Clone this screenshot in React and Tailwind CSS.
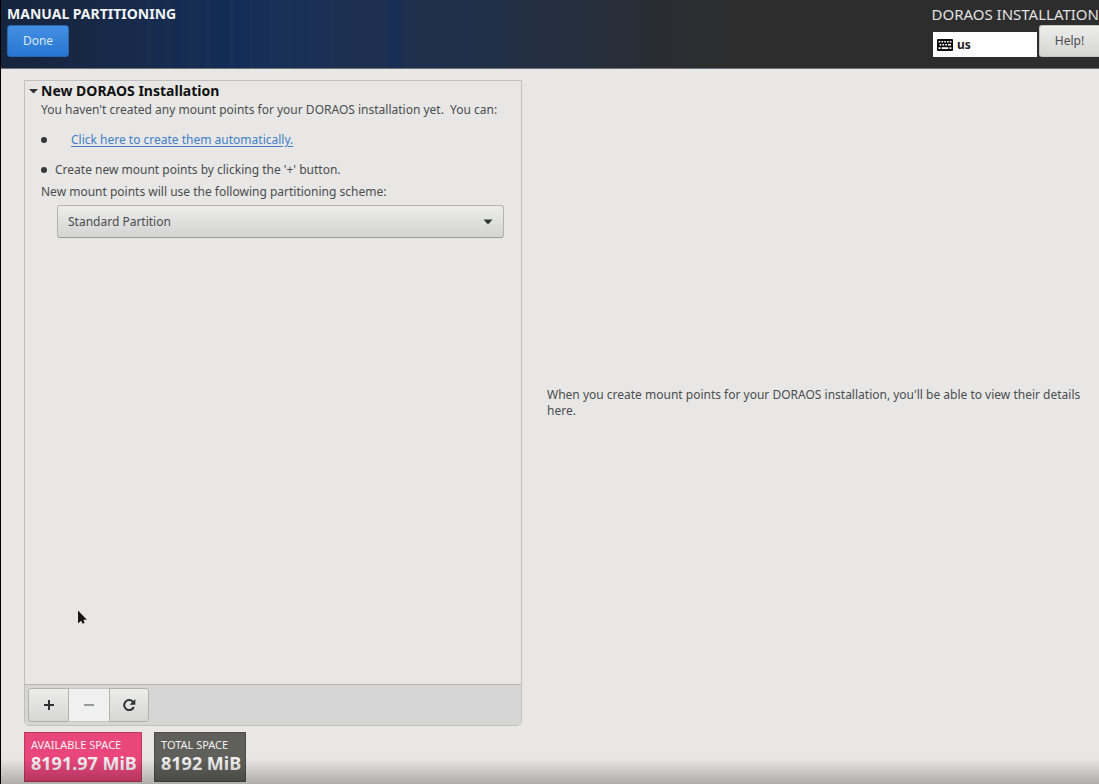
import React, { useState } from "react";

function KeyboardIcon() {
  return (
    <svg viewBox="0 0 16 12" className="h-3 w-4 shrink-0" aria-hidden="true">
      <rect width="16" height="12" rx="1" fill="#0c0c0c" />
      <g fill="#fff">
        <path d="M1.600 2h1.700v1.600H1.600zM4.400 2h1.700v1.600H4.400zM7.200 2h1.700v1.600H7.200zM10 2h1.700v1.600H10zM12.700 2h1.700v1.600h-1.700z" />
        <path d="M2.600 5h1.700v1.600H2.600zM5.400 5h1.700v1.600H5.400zM8.200 5h1.700v1.600H8.200zM11 5h3v1.600h-3z" />
        <path d="M1.600 8.200h1.900v1.700H1.600zM4.700 8.200h6.600v1.700H4.700zM12.500 8.200h1.900v1.700h-1.900z" />
      </g>
    </svg>
  );
}

function Pointer() {
  return (
    <svg viewBox="0 0 12 19" className="pointer-events-none absolute top-[609px] left-[75px] h-[19px] w-3" aria-hidden="true">
      <path d="M1.500 1v14.500l3.300-3 2.500 5.300 2.600-1.200-2.400-5.100h4.200z" fill="#e9e9e9" />
      <path d="M2 1.500v13l3-2.800 1.800 3 1.700-.8-1-3.200h3.400z" fill="#161616" />
    </svg>
  );
}

function HeaderStreaks() {
  return (
    <svg viewBox="0 0 740 68" preserveAspectRatio="none" className="pointer-events-none absolute inset-y-0 left-0 h-full w-2/3" aria-hidden="true">
      <g fill="#0c2b5c" opacity="0.3">
        <path d="M158 0h5v68h-5zM176 0h8v68h-8zM202 0h5v68h-5zM213 0h18v68h-18zM236 0h14v68h-14zM392 0h14v68h-14z" />
      </g>
      <g fill="#3a5d8c" opacity="0.07">
        <path d="M148 0h3v68h-3zM168 0h3v68h-3zM190 0h4v68h-4zM208 0h3v68h-3zM231 0h4v68h-4zM252 0h3v68h-3zM272 0h3v68h-3zM290 0h4v68h-4zM312 0h3v68h-3zM334 0h3v68h-3z" />
      </g>
    </svg>
  );
}

const toolButton =
  "flex h-[34px] items-center justify-center border-[#b2b2b0] bg-linear-to-b from-[#ededec] to-[#d6d6d4] text-[#2e3436]";

function Space({ label, value, className }) {
  return (
    <div className={`flex h-[50px] flex-col border border-black/20 px-1.5 pt-1 whitespace-nowrap text-[#f3f0f1] ${className}`}>
      <span className="text-[11px] leading-4">{label}</span>
      <span className="text-lg leading-5 font-bold">{value}</span>
    </div>
  );
}

export default function App() {
  const [scheme, setScheme] = useState("Standard Partition");
  return (
    <div className="relative flex min-h-screen flex-col overflow-hidden border-l border-black bg-[#e8e7e5] font-['Noto_Sans',sans-serif] text-xs leading-4 text-[#4a4d4e]">
      <header className="relative flex h-[69px] justify-between border-b border-[#70747a] bg-[linear-gradient(90deg,#16243d_0%,#172a4a_12%,#162d54_20%,#172f58_24%,#1d3050_33%,#202f4a_42%,#242f3e_52%,#292d33_60%,#2d2d2d_67%)] pt-1 pl-1.5">
        <HeaderStreaks />
        <div className="relative flex flex-col items-start gap-px">
          <h1 className="text-sm leading-5 font-bold text-[#f2f4f7]">MANUAL PARTITIONING</h1>
          <button type="button" className="h-8 w-[62px] rounded-[3px] border border-[#2867ab] bg-linear-to-b from-[#438fe4] to-[#2676d0] text-[#dce9f8]">
            Done
          </button>
        </div>
        <div className="flex flex-col items-end gap-px">
          <p className="text-[15px] leading-5 whitespace-nowrap text-[#e1e1e1]">DORAOS INSTALLATION</p>
          <div className="flex items-end gap-0.5">
            <button type="button" aria-label="Keyboard layout: us" className="flex h-[25px] w-[104px] items-center gap-1 bg-white pl-1 font-bold text-[#222]">
              <KeyboardIcon />
              us
            </button>
            <button type="button" className="h-8 w-[60px] rounded-l-[3px] border border-r-0 border-[#c4c4c2] bg-linear-to-b from-[#ededec] to-[#d5d5d3] text-[#4a4d4e]">
              Help!
            </button>
          </div>
        </div>
      </header>

      <main className="grid flex-1 grid-cols-[498fr_552fr] gap-x-[25px] pt-[11px] pl-[23px]">
        <section className="flex flex-col rounded-b-[5px] border border-[#c0c0be]">
          <div className="flex-1 pr-[17px] pl-4">
            <h2 className="mb-px -ml-3 flex items-center text-sm leading-5 font-bold text-[#111]">
              <svg viewBox="0 0 12 8" className="h-2 w-3 shrink-0" aria-hidden="true">
                <path d="M0 2h9L4.500 6.500z" fill="#2e3436" />
              </svg>
              New DORAOS Installation
            </h2>
            <p className="whitespace-pre">{"You haven't created any mount points for your DORAOS installation yet.  You can:"}</p>
            <ul>
              <li className="mt-3.5 flex items-center">
                <span className="mr-6 size-1.5 rounded-full bg-[#35383a]" />
                <a href="#automatic" className="text-[#3f80c8] underline underline-offset-2">Click here to create them automatically.</a>
              </li>
              <li className="mt-3.5 flex items-center">
                <span className="mr-2 size-1.5 rounded-full bg-[#35383a]" />
                Create new mount points by clicking the '+' button.
              </li>
            </ul>
            <label htmlFor="scheme" className="mt-1.5 block">New mount points will use the following partitioning scheme:</label>
            <div className="mt-[5px] ml-4 grid items-center">
              <select
                id="scheme"
                value={scheme}
                onChange={(e) => setScheme(e.target.value)}
                className="col-start-1 row-start-1 h-[33px] w-full appearance-none rounded-[3px] border border-[#b4b4b2] border-b-[#999] bg-linear-to-b from-[#ececeb] to-[#d4d4d2] px-2.5 text-[#4a4d4e]"
              >
                <option>Standard Partition</option>
                <option>LVM</option>
                <option>LVM Thin Provisioning</option>
              </select>
              <svg viewBox="0 0 10 6" className="pointer-events-none col-start-1 row-start-1 mr-[11px] h-1.5 w-2.5 justify-self-end" aria-hidden="true">
                <path d="M0.500 0.500h9L5 5.500z" fill="#2e3436" />
              </svg>
            </div>
          </div>
          <div className="flex h-[41px] items-center border-t border-[#b8b8b6] bg-[#d6d6d6] pl-[3px]">
            <button type="button" aria-label="Add mount point" className={`${toolButton} w-[41px] rounded-l-[3px] border`}>
              <svg viewBox="0 0 10 10" className="size-2.5" aria-hidden="true">
                <path d="M5 0v10M0 5h10" stroke="currentColor" strokeWidth="2" />
              </svg>
            </button>
            <button type="button" disabled aria-label="Remove mount point" className="flex h-[34px] w-10 items-center justify-center border-y border-[#c6c6c4] bg-[#f0f0f0] text-[#96999a]">
              <svg viewBox="0 0 10 10" className="size-2.5" aria-hidden="true">
                <path d="M0 5h10" stroke="currentColor" strokeWidth="2" />
              </svg>
            </button>
            <button type="button" aria-label="Reload" className={`${toolButton} w-10 rounded-r-[3px] border`}>
              <svg viewBox="0 0 14 14" className="size-3.5" aria-hidden="true">
                <path d="M11 3.800A5 5 0 1 0 11.800 9" fill="none" stroke="currentColor" strokeWidth="2" />
                <path d="M13.300 1v5.700H7.600z" fill="currentColor" />
              </svg>
            </button>
          </div>
        </section>
        <p className="self-center pr-3">
          When you create mount points for your DORAOS installation, you'll be able to view their details here.
        </p>
      </main>

      <footer className="flex gap-3 pt-1.5 pb-0.5 pl-[23px]">
        <Space label="AVAILABLE SPACE" value="8191.97 MiB" className="w-[118px] bg-[#e9467c]" />
        <Space label="TOTAL SPACE" value="8192 MiB" className="w-[92px] bg-[#5f6059]" />
      </footer>
      <div className="pointer-events-none absolute inset-x-0 bottom-0 h-[26px] bg-linear-to-b from-transparent to-black/25" />
      <Pointer />
    </div>
  );
}
